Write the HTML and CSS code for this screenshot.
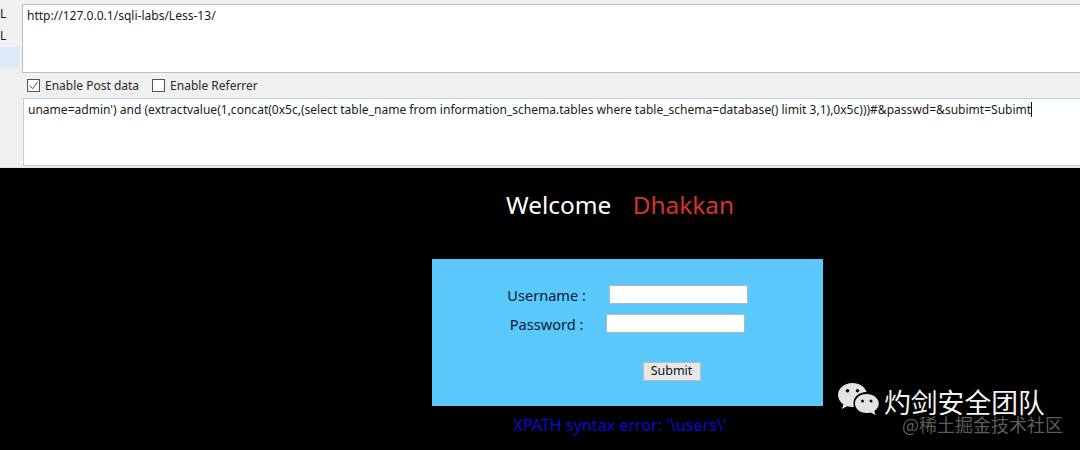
FILE: index.html
```html
<!DOCTYPE html>
<html lang="en">
<head>
<meta charset="utf-8">
<title>Less-13</title>
<link rel="stylesheet" href="styles.css">
</head>
<body>
<section class="toolbar">
  <nav class="side">
    <div class="side-item">L</div>
    <div class="side-item">L</div>
    <div class="side-item selected"></div>
  </nav>
  <div class="fields">
    <div class="box url-box">http://127.0.0.1/sqli-labs/Less-13/</div>
    <div class="checks">
      <label class="check"><span class="tick"><svg viewBox="0 0 13 13" width="13" height="13"><path d="M2.500 6.500l3 3.200 5-6.400" fill="none" stroke="#555" stroke-width="1"/></svg></span>Enable Post data</label>
      <label class="check"><span class="tick"></span>Enable Referrer</label>
    </div>
    <div class="box post-box">uname=admin') and (extractvalue(1,concat(0x5c,(select table_name from information_schema.tables where table_schema=database() limit 3,1),0x5c)))#&amp;passwd=&amp;subimt=Subimt<span class="caret"></span></div>
  </div>
</section>
<main class="page">
  <h1 class="welcome">Welcome <span class="name">Dhakkan</span></h1>
  <form class="login">
    <div class="row user">Username : <span class="input"></span></div>
    <div class="row pass">Password : <span class="input"></span></div>
    <div class="row action"><span class="submit">Submit</span></div>
  </form>
  <p class="error">XPATH syntax error: '\users\'</p>
</main>
<aside class="mark">
  <div class="mark-top">
    <svg class="wechat" viewBox="0 0 42 36" width="42" height="36">
      <path d="M15.500 1C7.500 1 1 6.300 1 13c0 3.800 2.100 7.100 5.400 9.400L4.800 27l5.400-2.800c1.700.500 3.400.800 5.300.800.500 0 1 0 1.500-.1-.4-1.200-.6-2.400-.6-3.700C16.400 15 22.300 9.900 29.600 10 28 4.800 22.300 1 15.500 1z" fill="#e3e3e3"/>
      <circle cx="10.500" cy="8.800" r="1.800" fill="#111"/><circle cx="20.500" cy="8.800" r="1.800" fill="#111"/>
      <path d="M29.500 12C22.900 12 18 16.200 18 21.500S22.900 31 29.500 31c1.400 0 2.800-.2 4-.6L38.500 33l-1.200-4c2.700-1.800 4.500-4.500 4.500-7.500C41.800 16.200 36 12 29.500 12z" fill="#e3e3e3"/>
      <circle cx="25.500" cy="19" r="1.500" fill="#111"/><circle cx="34" cy="19" r="1.500" fill="#111"/>
    </svg>
    <span class="team">灼剑安全团队</span>
  </div>
  <div class="site">@稀土掘金技术社区</div>
</aside>
</body>
</html>
```

FILE: styles.css
```css
* { box-sizing: border-box; }
html, body { margin: 0; height: 100%; overflow: hidden; }
body {
  position: relative;
  width: 1080px;
  height: 450px;
  background: #000;
  font-family: "Noto Sans", "Open Sans", "Noto Sans CJK SC", sans-serif;
}
.toolbar {
  display: flex;
  height: 168px;
  background: #f0f0f0;
  border-bottom: 1px solid #e4e4e4;
}
.side {
  width: 19px;
  flex: none;
  padding-top: 3px;
  margin-right: 3px;
}
.side-item {
  height: 22px;
  font-size: 12px;
  line-height: 22px;
  color: #222;
}
.side-item.selected { height: 21px; background: #dce9f7; }
.fields {
  flex: 1;
  min-width: 0;
  padding-top: 4px;
}
.box {
  background: #fff;
  font-size: 12.040px;
  line-height: 16px;
  color: #1a1a1a;
  white-space: nowrap;
  overflow: hidden;
}
.url-box {
  height: 69px;
  border: 1px solid #bdbdbd;
  border-right: 0;
  padding: 3px 0 0 4px;
}
.checks {
  display: flex;
  align-items: center;
  gap: 13px;
  height: 25px;
  padding: 0 0 0 5px;
}
.check {
  display: flex;
  align-items: center;
  gap: 5px;
  font-size: 12px;
  color: #2a2a2a;
}
.tick {
  display: block;
  width: 13px;
  height: 13px;
  border: 1px solid #555;
  background: #fff;
  line-height: 0;
}
.tick svg { margin: -1px; }
.post-box {
  height: 68px;
  margin-left: 1px;
  border: 1px solid #b8cfe8;
  border-right: 0;
  padding: 3px 0 0 4px;
}
.caret {
  display: inline-block;
  width: 1px;
  height: 15px;
  background: #111;
  vertical-align: -3px;
}
.page {
  display: flex;
  flex-direction: column;
  align-items: center;
  padding-left: 175px;
}
.welcome {
  margin: 18px 15px 0 0;
  height: 73px;
  font-size: 24.400px;
  font-weight: 400;
  line-height: 38px;
  color: #fff;
  white-space: pre;
  word-spacing: 15px;
}
.name { color: #d9322a; }
.login {
  width: 391px;
  height: 147px;
  background: #5bc8fb;
  padding-top: 26px;
  font-size: 14.600px;
  color: #0c1a2c;
}
.row {
  display: flex;
  justify-content: center;
  align-items: center;
  gap: 19px;
  height: 19px;
  white-space: pre;
}
.pass { margin-top: 10px; }
.input {
  display: block;
  width: 139px;
  height: 19px;
  background: #fff;
  border: 1px solid #a9b9c6;
}
.action { margin-top: 29px; padding-left: 88px; }
.submit {
  display: block;
  width: 58px;
  height: 19px;
  background: #e6e6e6;
  border: 1px solid #bcbcbc;
  font-size: 12.500px;
  line-height: 16px;
  text-align: center;
  color: #111;
}
.error {
  margin: 9px 15px 0 0;
  font-size: 16.100px;
  line-height: 21px;
  color: #0a0ad2;
}
.mark {
  position: absolute;
  left: 837px;
  top: 387px;
  width: 243px;
}
.mark-top {
  display: flex;
  align-items: center;
  gap: 5px;
  height: 30px;
}
.wechat { margin: -5px 0 -1px; }
.team {
  font-family: "Noto Sans CJK SC", sans-serif;
  font-size: 26.800px;
  line-height: 30px;
  color: #f2f2f2;
}
.site {
  margin: 1px 0 0 65px;
  font-family: "Noto Sans CJK SC", sans-serif;
  font-size: 18px;
  line-height: 12px;
  color: #5c5c5c;
  white-space: nowrap;
}
```
